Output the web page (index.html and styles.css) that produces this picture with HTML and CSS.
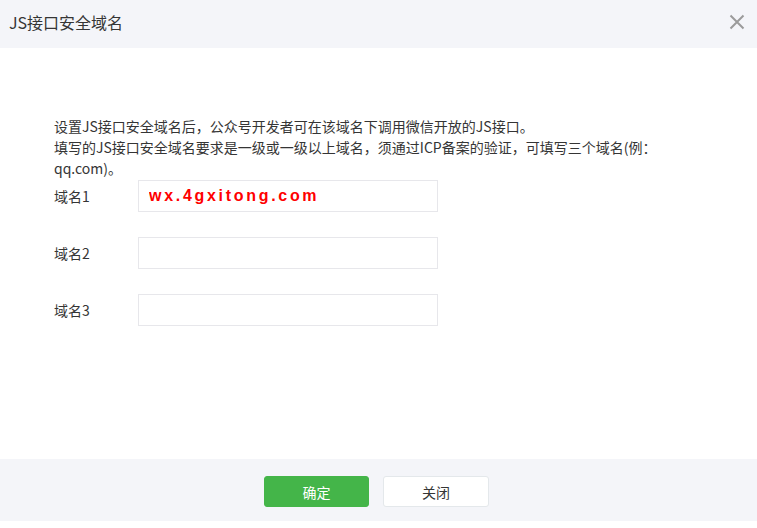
FILE: index.html
```html
<!DOCTYPE html>
<html lang="zh-CN">
<head>
    <meta charset="UTF-8">
    <meta name="viewport" content="width=device-width, initial-scale=1.0">
    <title>JS接口安全域名</title>
    <link rel="stylesheet" href="styles.css">
</head>
<body>
    <div class="dialog">
        <div class="dialog-header">
            <h3 class="dialog-title">JS接口安全域名</h3>
            <button class="close-icon" aria-label="关闭">
                <svg width="16" height="16" viewBox="0 0 16 16">
                    <path d="M1.5 1.5 L14.5 14.5 M14.5 1.5 L1.5 14.5" stroke="#9b9b9b" stroke-width="2" fill="none"/>
                </svg>
            </button>
        </div>

        <div class="dialog-body">
            <p class="tips">
                设置JS接口安全域名后，公众号开发者可在该域名下调用微信开放的JS接口。<br>
                填写的JS接口安全域名要求是一级或一级以上域名，须通过ICP备案的验证，可填写三个域名(例：qq.com)。
            </p>

            <div class="form-group">
                <label class="form-label">域名1</label>
                <input type="text" class="form-input filled" value="wx.4gxitong.com">
            </div>
            <div class="form-group">
                <label class="form-label">域名2</label>
                <input type="text" class="form-input">
            </div>
            <div class="form-group">
                <label class="form-label">域名3</label>
                <input type="text" class="form-input">
            </div>
        </div>

        <div class="dialog-footer">
            <button class="btn btn-primary">确定</button>
            <button class="btn btn-default">关闭</button>
        </div>
    </div>
</body>
</html>
```

FILE: styles.css
```css
* {
    margin: 0;
    padding: 0;
    box-sizing: border-box;
}

body {
    font-family: 'Noto Sans CJK SC', 'Microsoft YaHei', sans-serif;
    background-color: #ffffff;
    color: #353535;
    font-size: 14px;
}

.dialog {
    width: 757px;
    background-color: #ffffff;
}

.dialog-header {
    height: 48px;
    background-color: #f4f5f9;
    display: flex;
    align-items: center;
    justify-content: space-between;
    padding: 0 12px 0 9px;
}

.dialog-title {
    font-size: 16px;
    font-weight: normal;
    color: #353535;
    margin-top: -4px;
}

.close-icon {
    background: none;
    border: none;
    width: 16px;
    height: 16px;
    display: flex;
    margin-top: -5px;
    cursor: pointer;
}

.dialog-body {
    height: 411px;
    padding: 68px 54px 0 54px;
}

.tips {
    max-width: 620px;
    line-height: 21px;
    margin-bottom: 1px;
}

.form-group {
    display: flex;
    align-items: center;
    margin-bottom: 25px;
}

.form-label {
    width: 84px;
    line-height: 32px;
}

.form-input {
    width: 300px;
    height: 32px;
    border: 1px solid #e7e7eb;
    background-color: #ffffff;
    padding: 0 10px;
    font-size: 14px;
    outline: none;
}

.form-input.filled {
    color: #ff0000;
    font-family: 'Liberation Sans', Arial, sans-serif;
    font-size: 16px;
    font-weight: bold;
    letter-spacing: 2.7px;
}

.dialog-footer {
    height: 62px;
    background-color: #f4f5f9;
    display: flex;
    justify-content: center;
    gap: 14px;
    padding-top: 17px;
    padding-right: 4px;
}

.btn {
    width: 105px;
    height: 31px;
    border-radius: 3px;
    font-family: inherit;
    font-size: 14px;
    cursor: pointer;
}

.btn-primary {
    background-color: #44b549;
    border: 1px solid #44b549;
    color: #ffffff;
}

.btn-default {
    width: 106px;
    background-color: #ffffff;
    border: 1px solid #e4e8eb;
    color: #353535;
}
```
